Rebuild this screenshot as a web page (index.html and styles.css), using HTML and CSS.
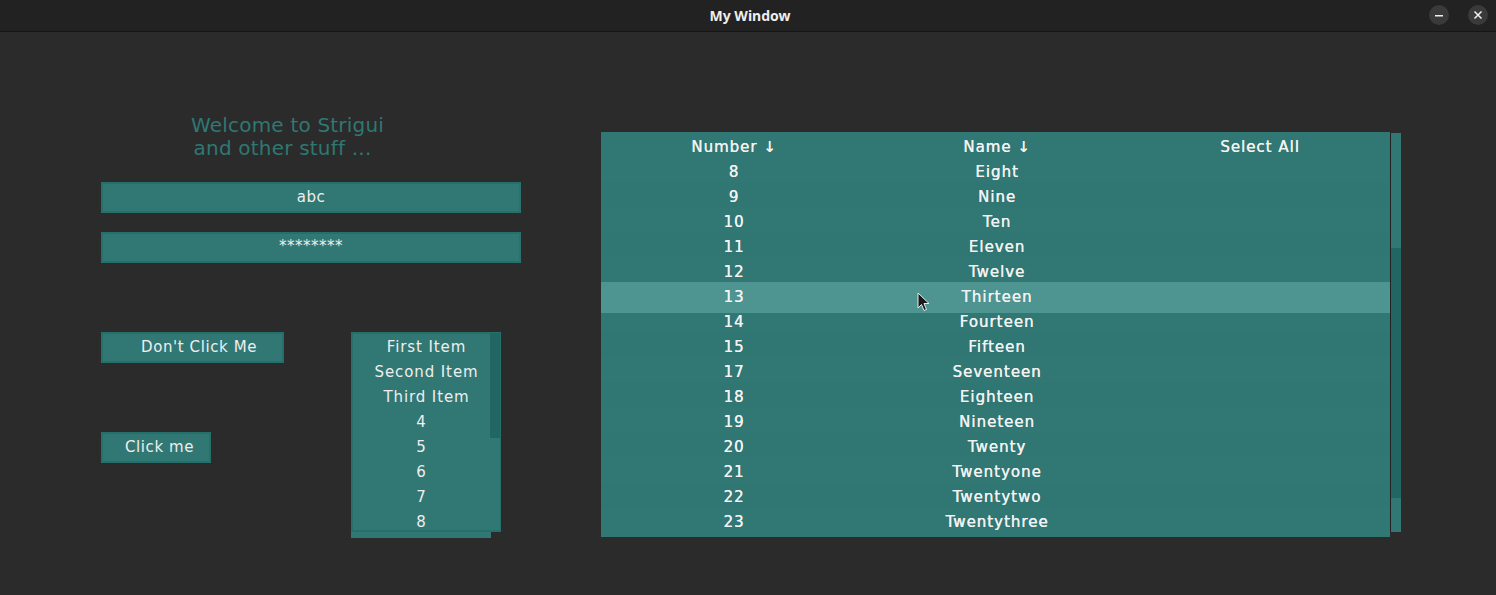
FILE: index.html
```html
<!DOCTYPE html>
<html>
<head>
<meta charset="utf-8">
<link rel="stylesheet" href="styles.css">
</head>
<body>
<div class="titlebar">
  <span class="title">My Window</span>
  <div class="wbtns">
    <span class="wbtn"><svg width="20" height="20" viewBox="0 0 20 20"><rect x="6" y="10" width="8" height="1.5" fill="#f0f0f0"/></svg></span>
    <span class="wbtn"><svg width="20" height="20" viewBox="0 0 20 20"><path d="M6.5 6.5 L13.5 13.5 M13.5 6.5 L6.5 13.5" stroke="#f0f0f0" stroke-width="1.5"/></svg></span>
  </div>
</div>
<div class="main">
  <div class="left">
    <div class="welcome">Welcome to Strigui<br><span class="l2">and other stuff ...</span></div>
    <div class="field">abc</div>
    <div class="field pw">********</div>
    <div class="lower">
      <div class="btns">
        <div class="btn btn1">Don't Click Me</div>
        <div class="btn btn2">Click me</div>
      </div>
      <div class="listwrap">
        <div class="list">
          <div class="items">
            <div class="txt">First Item</div>
            <div class="txt">Second Item</div>
            <div class="txt">Third Item</div>
            <div>4</div>
            <div>5</div>
            <div>6</div>
            <div>7</div>
            <div>8</div>
          </div>
          <div class="lscroll"><div class="lthumb"></div></div>
        </div>
        <div class="lstrip"></div>
      </div>
    </div>
  </div>
  <div class="tablewrap">
    <div class="table">
      <div class="row head"><span>Number ↓</span><span>Name ↓</span><span>Select All</span></div>
      <div class="row"><span>8</span><span>Eight</span><span></span></div>
      <div class="row alt"><span>9</span><span>Nine</span><span></span></div>
      <div class="row"><span>10</span><span>Ten</span><span></span></div>
      <div class="row alt"><span>11</span><span>Eleven</span><span></span></div>
      <div class="row"><span>12</span><span>Twelve</span><span></span></div>
      <div class="row hl"><span>13</span><span>Thirteen</span><span></span></div>
      <div class="row"><span>14</span><span>Fourteen</span><span></span></div>
      <div class="row alt"><span>15</span><span>Fifteen</span><span></span></div>
      <div class="row"><span>17</span><span>Seventeen</span><span></span></div>
      <div class="row alt"><span>18</span><span>Eighteen</span><span></span></div>
      <div class="row"><span>19</span><span>Nineteen</span><span></span></div>
      <div class="row alt"><span>20</span><span>Twenty</span><span></span></div>
      <div class="row"><span>21</span><span>Twentyone</span><span></span></div>
      <div class="row alt"><span>22</span><span>Twentytwo</span><span></span></div>
      <div class="row"><span>23</span><span>Twentythree</span><span></span></div>
      <svg class="cursor" width="14" height="20" viewBox="0 0 14 20"><path d="M1 1 L1 16 L4.5 12.5 L7 18.5 L9.5 17.5 L7 11.5 L12 11.5 Z" fill="#1a1a1a" stroke="#e8e8e8" stroke-width="1"/></svg>
    </div>
    <div class="tscroll"><div class="tthumb"></div></div>
  </div>
</div>
</body>
</html>
```
FILE: styles.css
```css
html, body {
  margin: 0;
  padding: 0;
  background: #2b2b2b;
  width: 1496px;
  height: 595px;
  overflow: hidden;
  font-family: "DejaVu Sans", sans-serif;
}
.titlebar {
  height: 31px;
  background: #222222;
  border-bottom: 1px solid #151515;
  display: flex;
  align-items: center;
  justify-content: center;
  position: relative;
}
.title {
  font-family: "Noto Sans", "DejaVu Sans", sans-serif;
  font-weight: 700;
  font-size: 14px;
  color: #eeeeee;
  margin-left: 4px;
}
.wbtns {
  position: absolute;
  right: 8px;
  top: 5px;
  display: flex;
  gap: 19px;
}
.wbtn {
  width: 20px;
  height: 20px;
  border-radius: 50%;
  background: #3a3a3a;
  display: block;
}
.wbtn svg { display: block; }
.main {
  display: flex;
  padding-left: 101px;
}
.left {
  width: 420px;
  display: flex;
  flex-direction: column;
}
.welcome {
  width: 373px;
  margin-top: 82px;
  text-align: center;
  color: #2f7873;
  font-size: 20px;
  letter-spacing: 0.2px;
  line-height: 23px;
}
.welcome .l2 {
  display: inline-block;
  margin-right: 10px;
}
.field {
  margin-top: 22px;
  height: 27px;
  background: #317874;
  border: 2px solid #26706b;
  border-right-color: #2a726d;
  color: #eeeeee;
  font-size: 15px;
  line-height: 27px;
  letter-spacing: 0.5px;
  text-align: center;
}
.field.pw {
  margin-top: 19px;
  line-height: 25px;
}
.lower {
  margin-top: 69px;
  display: flex;
}
.btns {
  width: 250px;
  display: flex;
  flex-direction: column;
  align-items: flex-start;
}
.btn {
  height: 27px;
  background: #317874;
  border: 2px solid #26706b;
  color: #eeeeee;
  font-size: 15px;
  line-height: 26px;
  letter-spacing: 0.6px;
}
.btn1 { width: 141px; padding-left: 38px; }
.btn2 { width: 84px; padding-left: 22px; margin-top: 69px; }
.listwrap {
  width: 150px;
  display: flex;
  flex-direction: column;
}
.list {
  height: 196px;
  display: flex;
  border: 2px solid #26706b;
  border-right: none;
  background: #317874;
}
.items {
  width: 138px;
  color: #eeeeee;
  font-size: 15px;
  letter-spacing: 0.9px;
  text-align: center;
  padding-top: 2px;
}
.items div {
  height: 25px;
  line-height: 23px;
}
.items .txt { padding-left: 10px; }
.lscroll {
  width: 10px;
  background: #317874;
  border-right: 1px solid #26706b;
}
.lthumb {
  height: 105px;
  margin-top: -1px;
  background: #216662;
}
.lstrip {
  width: 140px;
  height: 6px;
  background: #317874;
}
.tablewrap {
  margin-left: 80px;
  margin-top: 100px;
  display: flex;
  align-items: flex-start;
}
.table {
  width: 789px;
  height: 405px;
  background: #317874;
  position: relative;
  color: #f2f2f2;
  font-size: 15px;
  letter-spacing: 1px;
}
.row {
  height: 25px;
  display: grid;
  grid-template-columns: 263px 263px 263px;
  line-height: 30px;
  text-align: center;
}
.row span {
  display: block;
  padding-left: 3px;
  text-shadow: 0.3px 0 0 #f2f2f2;
}
.row.alt { background: #307672; }
.row.hl {
  background: #4e9591;
  box-shadow: 0 6px 0 #4e9591;
}
.cursor {
  position: absolute;
  left: 316px;
  top: 160px;
}
.tscroll {
  width: 10px;
  height: 399px;
  margin-top: 1px;
  border-left: 1px solid #222222;
  background: #317874;
  display: flex;
  flex-direction: column;
}
.tthumb {
  margin-top: 115px;
  height: 250px;
  background: #216662;
}
```
